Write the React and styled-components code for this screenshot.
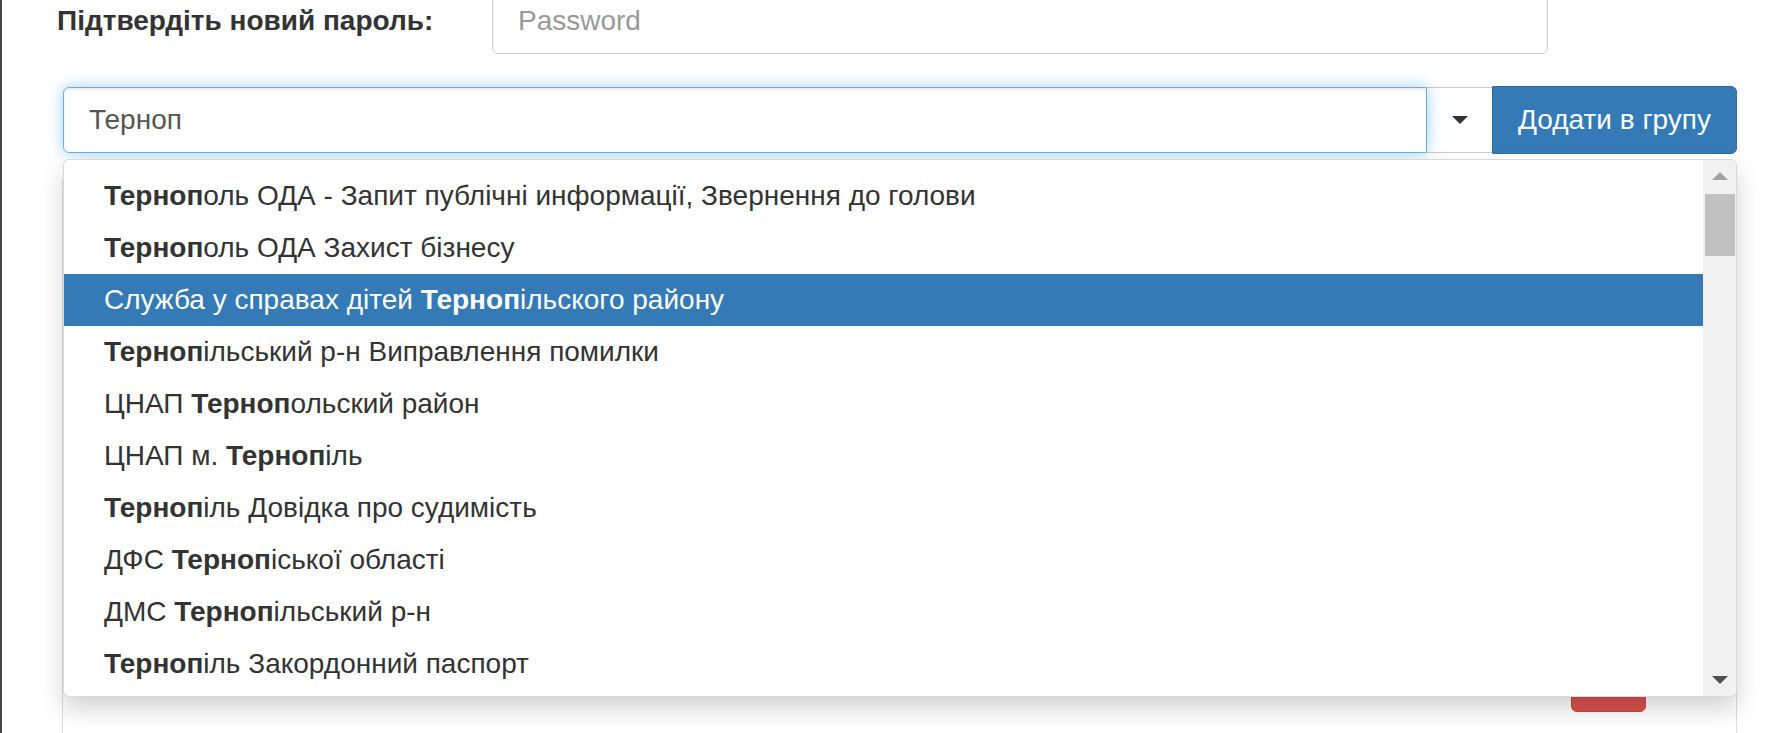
import React from 'react';
import styled, { createGlobalStyle } from 'styled-components';

const GlobalStyle = createGlobalStyle`
  html, body {
    margin: 0;
    padding: 0;
    background: #fff;
    overflow: hidden;
  }
  body {
    font-family: "Liberation Sans", Arial, Helvetica, sans-serif;
    font-size: 28px;
    color: #333;
  }
`;

const Page = styled.div`
  height: 733px;
  border-left: 2px solid #454545;
  overflow: hidden;
`;

const FormRow = styled.div`
  display: grid;
  grid-template-columns: 490px 1056px;
  align-items: center;
  margin-top: -12px;
`;

const Label = styled.label`
  padding-left: 55px;
  font-weight: bold;
  color: #333;
`;

const TextInput = styled.input`
  box-sizing: border-box;
  height: 66px;
  width: 100%;
  padding: 0 25px;
  border: 1px solid #ccc;
  border-radius: 6px;
  font: inherit;
  color: #555;
  background: #fff;
  box-shadow: inset 0 2px 2px rgba(0, 0, 0, 0.075);
  outline: none;

  &::placeholder {
    color: #999;
  }
`;

const ComboWrap = styled.div`
  position: relative;
  margin: 33px 30px 0 61px;
  z-index: 2;
`;

const InputGroup = styled.div`
  display: flex;
  height: 66px;
`;

const ComboInput = styled.div`
  flex: 1;
  box-sizing: border-box;
  display: flex;
  align-items: center;
  padding: 0 25px;
  border: 1px solid #66afe9;
  border-radius: 6px 0 0 6px;
  color: #555;
  background: #fff;
  box-shadow: inset 0 2px 2px rgba(0, 0, 0, 0.075), 0 0 15px rgba(102, 175, 233, 0.6);
  position: relative;
`;

const Toggle = styled.div`
  width: 65px;
  box-sizing: border-box;
  display: flex;
  align-items: center;
  justify-content: center;
  border-top: 1px solid #ccc;
  border-bottom: 1px solid #ccc;
  background: #fff;
`;

const Caret = styled.span`
  width: 0;
  height: 0;
  border-top: 8px solid #333;
  border-left: 8px solid transparent;
  border-right: 8px solid transparent;
`;

const PrimaryButton = styled.button`
  width: 245px;
  box-sizing: border-box;
  border: 1px solid #2e6da4;
  border-radius: 0 6px 6px 0;
  background: #337ab7;
  color: #fff;
  font: inherit;
  padding: 0;
  margin-top: -1px;
  height: 68px;
`;

const Menu = styled.div`
  position: absolute;
  top: calc(100% + 6px);
  left: 0;
  right: 0;
  height: 538px;
  box-sizing: border-box;
  display: flex;
  background: #fff;
  border: 1px solid rgba(0, 0, 0, 0.15);
  border-radius: 6px;
  box-shadow: 0 12px 23px rgba(0, 0, 0, 0.175);
  overflow: hidden;
`;

const ItemList = styled.ul`
  flex: 1;
  list-style: none;
  margin: 0;
  padding: 10px 0 0;
  overflow: hidden;
`;

const Item = styled.li`
  padding: 6px 40px;
  line-height: 40px;
  white-space: nowrap;
  color: ${p => (p.$active ? '#fff' : '#333')};
  background: ${p => (p.$active ? '#337ab7' : 'transparent')};

  strong {
    font-weight: bold;
  }
`;

const ScrollTrack = styled.div`
  width: 33px;
  display: flex;
  flex-direction: column;
  background: #f1f1f1;
`;

const ScrollButton = styled.div`
  height: 32px;
  display: flex;
  align-items: center;
  justify-content: center;
`;

const Arrow = styled.span`
  width: 0;
  height: 0;
  border-left: 8px solid transparent;
  border-right: 8px solid transparent;
  ${p =>
    p.$down
      ? `border-top: 8px solid ${p.$color};`
      : `border-bottom: 8px solid ${p.$color};`}
`;

const Thumb = styled.div`
  height: 62px;
  margin: 2px 1px 0 2px;
  background: #c1c1c1;
`;

const Spacer = styled.div`
  flex: 1;
`;

const Panel = styled.div`
  margin: 22px 30px 0 60px;
  height: 600px;
  box-sizing: border-box;
  border: 1px solid #ddd;
  border-radius: 6px;
  display: flex;
  justify-content: flex-end;
  align-items: flex-end;
  padding: 0 90px 62px 0;
`;

const DangerButton = styled.button`
  width: 75px;
  height: 50px;
  border: 1px solid #d43f3a;
  border-radius: 6px;
  background: #d9534f;
`;

const items = [
  { before: '', after: 'оль ОДА - Запит публічні информації, Звернення до голови' },
  { before: '', after: 'оль ОДА Захист бізнесу' },
  { before: 'Служба у справах дітей ', after: 'ільского району', active: true },
  { before: '', after: 'ільський р-н Виправлення помилки' },
  { before: 'ЦНАП ', after: 'ольский район' },
  { before: 'ЦНАП м. ', after: 'іль' },
  { before: '', after: 'іль Довідка про судимість' },
  { before: 'ДФС ', after: 'іської області' },
  { before: 'ДМС ', after: 'ільський р-н' },
  { before: '', after: 'іль Закордонний паспорт' },
];

const App = () => {
  return (
    <Page>
      <GlobalStyle />
      <FormRow>
        <Label>Підтвердіть новий пароль:</Label>
        <TextInput type="password" placeholder="Password" readOnly />
      </FormRow>

      <ComboWrap>
        <InputGroup>
          <ComboInput>Терноп</ComboInput>
          <Toggle>
            <Caret />
          </Toggle>
          <PrimaryButton>Додати в групу</PrimaryButton>
        </InputGroup>

        <Menu>
          <ItemList>
            {items.map((item, i) => (
              <Item key={i} $active={item.active}>
                {item.before}
                <strong>Терноп</strong>
                {item.after}
              </Item>
            ))}
          </ItemList>
          <ScrollTrack>
            <ScrollButton>
              <Arrow $color="#a3a3a3" />
            </ScrollButton>
            <Thumb />
            <Spacer />
            <ScrollButton>
              <Arrow $down $color="#505050" />
            </ScrollButton>
          </ScrollTrack>
        </Menu>
      </ComboWrap>

      <Panel>
        <DangerButton />
      </Panel>
    </Page>
  );
};

export default App;
